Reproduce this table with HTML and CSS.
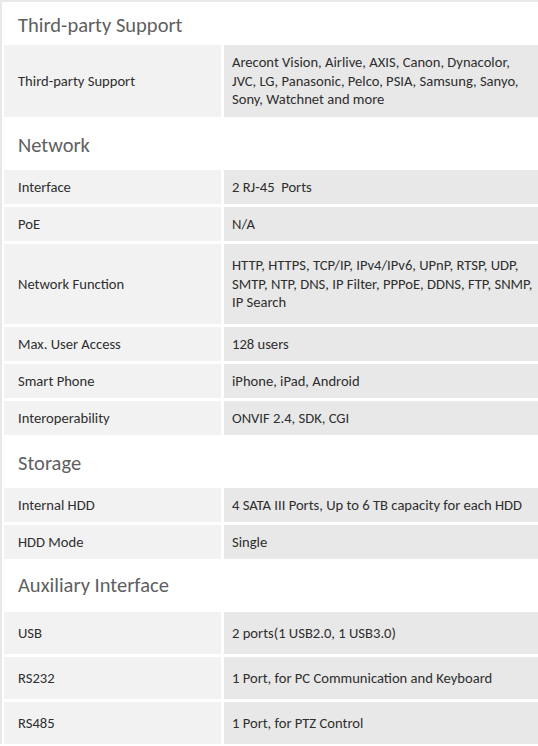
FILE: index.html
```html
<!DOCTYPE html>
<html>
<head>
<meta charset="utf-8">
<link rel="stylesheet" href="styles.css">
</head>
<body>
<div class="spec">
  <div class="section">Third-party Support</div>
  <div class="row row--h72">
    <div class="label">Third-party Support</div>
    <div class="value"><span>Arecont Vision, Airlive, AXIS, Canon, Dynacolor,<br>JVC, LG, Panasonic, Pelco, PSIA, Samsung, Sanyo,<br>Sony, Watchnet and more</span></div>
  </div>

  <div class="section">Network</div>
  <div class="row">
    <div class="label">Interface</div>
    <div class="value">2 RJ-45&nbsp; Ports</div>
  </div>
  <div class="row">
    <div class="label">PoE</div>
    <div class="value">N/A</div>
  </div>
  <div class="row row--h80">
    <div class="label">Network Function</div>
    <div class="value"><span>HTTP, HTTPS, TCP/IP, IPv4/IPv6, UPnP, RTSP, UDP,<br>SMTP, NTP, DNS, IP Filter, PPPoE, DDNS, FTP, SNMP,<br>IP Search</span></div>
  </div>
  <div class="row">
    <div class="label">Max. User Access</div>
    <div class="value">128 users</div>
  </div>
  <div class="row">
    <div class="label">Smart Phone</div>
    <div class="value">iPhone, iPad, Android</div>
  </div>
  <div class="row">
    <div class="label">Interoperability</div>
    <div class="value">ONVIF 2.4, SDK, CGI</div>
  </div>

  <div class="section">Storage</div>
  <div class="row">
    <div class="label">Internal HDD</div>
    <div class="value">4 SATA III Ports, Up to 6 TB capacity for each HDD</div>
  </div>
  <div class="row">
    <div class="label">HDD Mode</div>
    <div class="value">Single</div>
  </div>

  <div class="section section--aux">Auxiliary Interface</div>
  <div class="row row--h42">
    <div class="label">USB</div>
    <div class="value">2 ports(1 USB2.0, 1 USB3.0)</div>
  </div>
  <div class="row row--h42">
    <div class="label">RS232</div>
    <div class="value">1 Port, for PC Communication and Keyboard</div>
  </div>
  <div class="row row--h42">
    <div class="label">RS485</div>
    <div class="value">1 Port, for PTZ Control</div>
  </div>
</div>
</body>
</html>
```

FILE: styles.css
```css
html, body {
  margin: 0;
  padding: 0;
  background: #ffffff;
}

body {
  font-family: "Carlito", "Lato", "Liberation Sans", sans-serif;
  font-size: 14.6px;
  color: #2e2e2e;
  overflow: hidden;
}

.spec {
  border-top: 2px solid #e8e8e8;
  border-left: 2px solid #e8e8e8;
  padding-left: 2px;
  width: 534px;
}

.section {
  height: 50px;
  box-sizing: border-box;
  padding: 15px 0 0 14px;
  font-size: 20.5px;
  font-weight: 300;
  color: #606060;
  line-height: 20px;
}

.section:first-child {
  height: 43px;
  padding-top: 13px;
}

.section--aux {
  padding-top: 13px;
}

.row {
  display: grid;
  grid-template-columns: 217px 1fr;
  column-gap: 3px;
  margin-bottom: 3px;
  min-height: 34px;
}

.row--h72 { min-height: 72px; }
.row--h80 { min-height: 80px; }
.row--h42 { min-height: 42px; }

.label,
.value {
  display: flex;
  align-items: center;
  line-height: 18.5px;
}

.label {
  background: #f2f2f2;
  padding: 0 14px;
}

.value {
  background: #e8e8e8;
  padding: 0 0 0 8px;
  white-space: nowrap;
}
```
